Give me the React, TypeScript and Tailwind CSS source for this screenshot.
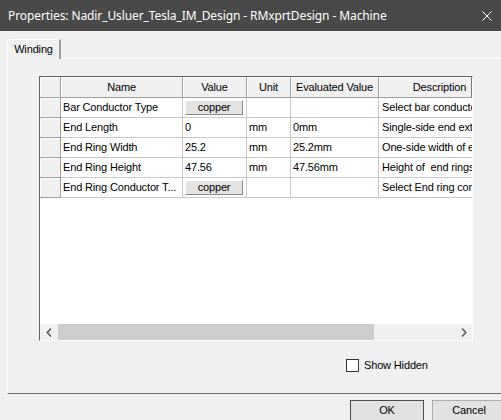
import React from "react";

const rows = [
  { name: "Bar Conductor Type", value: "copper", btn: true, unit: "", evalv: "", desc: "Select bar conductor type" },
  { name: "End Length", value: "0", btn: false, unit: "mm", evalv: "0mm", desc: "Single-side end extension length" },
  { name: "End Ring Width", value: "25.2", btn: false, unit: "mm", evalv: "25.2mm", desc: "One-side width of end rings" },
  { name: "End Ring Height", value: "47.56", btn: false, unit: "mm", evalv: "47.56mm", desc: "Height of  end rings" },
  { name: "End Ring Conductor T...", value: "copper", btn: true, unit: "", evalv: "", desc: "Select End ring conductor type" },
];

const hdr = "h-full shrink-0 bg-[#f0f0f0] border-r border-b border-[#a0a0a0] shadow-[inset_1px_1px_0_#ffffff] flex items-center justify-center";
const cell = "h-full shrink-0 border-r border-b border-[#c8c8c8] flex items-center overflow-hidden whitespace-pre";

export default function App() {
  return (
    <div
      className="w-[501px] h-[420px] overflow-hidden bg-[#f0f0f0] flex flex-col text-[11px] tracking-[-0.15px] text-black"
      style={{ fontFamily: '"Liberation Sans", Arial, sans-serif' }}
    >
      {/* Title bar */}
      <div className="h-[31px] shrink-0 bg-[#494949] flex items-center justify-between pl-[8px] pr-[9px]">
        <span
          className="text-white text-[12px] tracking-[-0.1px]"
          style={{ fontFamily: '"Noto Sans", "Open Sans", sans-serif' }}
        >
          Properties: Nadir_Usluer_Tesla_IM_Design - RMxprtDesign - Machine
        </span>
        <svg width="10" height="10" viewBox="0 0 10 10">
          <path d="M0.5 0.5 L9.5 9.5 M9.5 0.5 L0.5 9.5" stroke="#ffffff" strokeWidth="1" />
        </svg>
      </div>

      {/* Tab strip */}
      <div className="pt-[8px] pl-[7px] flex">
        <div className="relative z-10 -mb-[1px] w-[54px] h-[20px] bg-[#f0f0f0] border-l border-t border-white border-r-2 border-r-[#a0a0a0] rounded-tl-[2px] flex items-center justify-center pb-[1px]">
          Winding
        </div>
      </div>

      {/* Panel */}
      <div className="ml-[7px] w-[520px] h-[336px] shrink-0 border-l border-t border-white border-b border-b-[#6f6f6f] flex flex-col pt-[17px] pl-[31px]">
        {/* Grid */}
        <div className="w-[434px] h-[265px] shrink-0 border-l border-t border-[#646464] border-r border-b border-r-white border-b-white bg-white flex flex-col">
          {/* header */}
          <div className="h-[21px] shrink-0 flex overflow-hidden border-r border-[#7a7a7a]">
            <div className={`${hdr} w-[21px]`} />
            <div className={`${hdr} w-[122px]`}>Name</div>
            <div className={`${hdr} w-[64px]`}>Value</div>
            <div className={`${hdr} w-[44px]`}>Unit</div>
            <div className={`${hdr} w-[88px]`}>Evaluated Value</div>
            <div className={`${hdr} w-[122px]`}>Description</div>
          </div>
          {rows.map((r) => (
            <div key={r.name} className="h-[20px] shrink-0 flex overflow-hidden">
              <div className="h-full w-[21px] shrink-0 bg-[#f0f0f0] border-r border-b border-[#a0a0a0] shadow-[inset_1px_1px_0_#ffffff]" />
              <div className={`${cell} w-[122px] pl-[2px]`}>{r.name}</div>
              <div className={`${cell} w-[64px] pl-[2px]`}>
                {r.btn ? (
                  <div className="w-[58px] h-[15px] bg-[#e3e3e3] border-l border-t border-white border-r border-b border-r-[#8a8a8a] border-b-[#8a8a8a] flex items-center justify-center">
                    {r.value}
                  </div>
                ) : (
                  r.value
                )}
              </div>
              <div className={`${cell} w-[44px] pl-[2px]`}>{r.unit}</div>
              <div className={`${cell} w-[88px] pl-[2px]`}>{r.evalv}</div>
              <div className={`${cell} w-[122px] pl-[3px]`}>{r.desc}</div>
            </div>
          ))}
          <div className="flex-1 bg-white" />
          {/* horizontal scrollbar */}
          <div className="h-[16px] shrink-0 bg-[#f0f0f0] flex">
            <div className="w-[18px] h-full flex items-center justify-center">
              <svg width="6" height="9" viewBox="0 0 6 9">
                <path d="M5 0.5 L1.2 4.5 L5 8.5" fill="none" stroke="#606060" strokeWidth="1.6" />
              </svg>
            </div>
            <div className="w-[316px] h-full bg-[#cdcdcd]" />
            <div className="flex-1" />
            <div className="w-[17px] h-full flex items-center justify-center">
              <svg width="6" height="9" viewBox="0 0 6 9">
                <path d="M1 0.5 L4.8 4.5 L1 8.5" fill="none" stroke="#606060" strokeWidth="1.6" />
              </svg>
            </div>
          </div>
        </div>

        {/* Show hidden */}
        <div className="mt-[16px] pl-[307px] flex items-center gap-[5px]">
          <div className="w-[13px] h-[13px] bg-white border border-[#333333]" />
          <span>Show Hidden</span>
        </div>
      </div>

      {/* Buttons */}
      <div className="pt-[6px] pl-[350px] flex gap-[8px]">
        <div className="w-[74px] h-[23px] shrink-0 bg-[#e1e1e1] border border-[#4d4d4d] flex items-center justify-center pb-[2px]">
          OK
        </div>
        <div className="w-[74px] h-[23px] shrink-0 bg-[#e1e1e1] border border-[#adadad] flex items-center justify-center pb-[2px]">
          Cancel
        </div>
      </div>
    </div>
  );
}
